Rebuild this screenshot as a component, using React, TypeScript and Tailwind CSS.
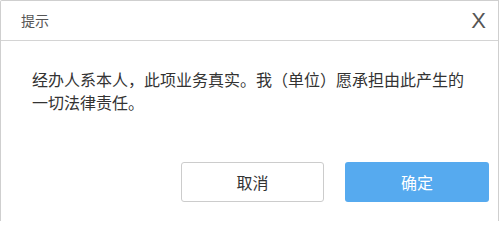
import React from "react";

const font = { fontFamily: '"Noto Sans CJK SC", "Noto Sans", sans-serif' };

const App = () => {
  return (
    <div className="w-[500px] h-[221px] bg-white" style={font}>
      <div className="w-[499px] h-[221px] border-l border-t border-r border-[#cfcfcf] rounded-tl-[2px] flex flex-col">
        <header className="h-[40px] border-b border-[#d4d4d4] flex items-center justify-between pl-[20px] pr-[12px]">
          <span className="text-[14px] text-[#555]">提示</span>
          <span className="text-[22px] leading-none text-[#555] font-['Liberation_Sans',sans-serif]">X</span>
        </header>
        <p className="mt-[27px] pl-[31px] pr-[10px] text-[16px] leading-[23px] text-[#333]">
          经办人系本人，此项业务真实。我（单位）愿承担由此产生的
          <br />
          一切法律责任。
        </p>
        <div className="mt-auto mb-[19px] flex justify-end gap-[21px] pr-[9px]">
          <button className="w-[143px] h-[40px] rounded-[3px] border border-[#cccccc] bg-white text-[16px] text-[#333]">
            取消
          </button>
          <button className="w-[144px] h-[40px] rounded-[3px] bg-[#56aaef] text-[16px] text-white">
            确定
          </button>
        </div>
      </div>
    </div>
  );
};

export default App;
